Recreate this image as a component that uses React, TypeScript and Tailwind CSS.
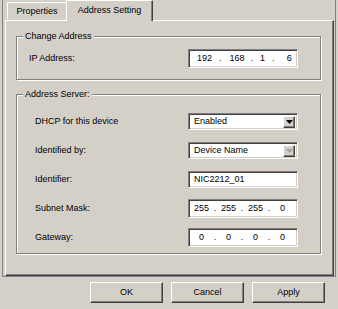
import React from "react";

const sunken =
  "border border-t-[#808080] border-l-[#808080] border-r-white border-b-white shadow-[inset_1px_1px_0_#404040,inset_-1px_-1px_0_#d4d0c8] bg-white";
const raised =
  "border border-t-white border-l-white border-r-[#404040] border-b-[#404040] shadow-[inset_-1px_-1px_0_#808080]";
const etched =
  "relative border border-[#808080] shadow-[inset_1px_1px_0_#fff,1px_1px_0_#fff]";

function Group({ title, className, children }: { title: string; className: string; children: React.ReactNode }) {
  return (
    <div className={`${etched} ${className}`}>
      <span className="absolute -top-[7px] left-[6px] px-[2px] bg-[#d4d0c8] leading-[12px]">{title}</span>
      {children}
    </div>
  );
}

function Row({ label, children }: { label: string; children: React.ReactNode }) {
  return (
    <div className="h-[29px] flex items-center justify-between">
      <span>{label}</span>
      {children}
    </div>
  );
}

function Select({ value, disabled }: { value: string; disabled?: boolean }) {
  return (
    <div className={`${sunken} w-[110px] h-[17px] flex items-center pl-[5px] pr-[2px]`}>
      <span className="flex-1">{value}</span>
      <span className={`${raised} bg-[#d4d0c8] w-[12px] h-[12px] flex items-center justify-center`}>
        <svg width="7" height="4" viewBox="0 0 7 4">
          <path d="M0 0h7L3.5 4z" fill={disabled ? "#a0a0a0" : "#000"} />
        </svg>
      </span>
    </div>
  );
}

function Ip({ parts }: { parts: string[] }) {
  return (
    <div className={`${sunken} w-[110px] h-[19px] flex items-center pl-[2px]`}>
      {parts.map((p, i) => (
        <React.Fragment key={i}>
          {i > 0 && <span className="w-[6px] text-center">.</span>}
          <span className="w-[21px] text-center">{p}</span>
        </React.Fragment>
      ))}
    </div>
  );
}

function Button({ label }: { label: string }) {
  return (
    <button className={`${raised} w-[73px] h-[21px] flex items-center justify-center bg-[#d4d0c8]`}>
      {label}
    </button>
  );
}

export default function App() {
  return (
    <div className="w-[338px] h-[309px] bg-[#d4d0c8] text-black text-[9px] leading-none overflow-hidden flex flex-col font-['Liberation_Sans',Arial,sans-serif]">
      {/* outer frame */}
      <div className="h-[277px] ml-[2px] mr-[2px] border-l border-r border-b border-[#808080] pl-[2px] pr-[1px] flex flex-col">
        {/* tabs */}
        <div className="h-[20px] flex items-end pl-[2px] relative z-10">
          <div className="h-[17px] w-[59px] border-t border-l border-white flex items-center justify-center mb-px">
            Properties
          </div>
          <div className="h-[21px] w-[87px] border-t border-l border-white border-r border-r-[#404040] shadow-[inset_-1px_0_0_#808080] bg-[#d4d0c8] -mb-px flex items-center justify-center pb-[2px]">
            Address Setting
          </div>
        </div>

        {/* pane */}
        <div className="flex-1 border-t border-l border-white border-r border-b border-r-[#404040] border-b-[#404040] shadow-[inset_-1px_-1px_0_#808080] pt-[15px] pl-[10px] pr-[12px]">
          <Group title="Change Address" className="h-[44px] flex items-center justify-between pl-[12px] pr-[22px]">
            <span>IP Address:</span>
            <div className={`${sunken} w-[110px] h-[19px] flex items-center pl-[8px]`}>
              <span>192</span>
              <span className="ml-[7px]">.</span>
              <span className="ml-[8px]">168</span>
              <span className="ml-[6px]">.</span>
              <span className="ml-[7px]">1</span>
              <span className="ml-[7px]">.</span>
              <span className="ml-[12px]">6</span>
            </div>
          </Group>

          <Group title="Address Server:" className="mt-[14px] h-[160px] pt-[12px] pl-[18px] pr-[22px]">
            <Row label="DHCP for this device">
              <Select value="Enabled" />
            </Row>
            <Row label="Identified by:">
              <Select value="Device Name" disabled />
            </Row>
            <Row label="Identifier:">
              <div className={`${sunken} w-[110px] h-[17px] flex items-center pl-[5px]`}>NIC2212_01</div>
            </Row>
            <Row label="Subnet Mask:">
              <Ip parts={["255", "255", "255", "0"]} />
            </Row>
            <Row label="Gateway:">
              <Ip parts={["0", "0", "0", "0"]} />
            </Row>
          </Group>
        </div>
      </div>

      {/* buttons */}
      <div className="flex justify-end gap-[8px] pt-[5px] pr-[13px]">
        <Button label="OK" />
        <Button label="Cancel" />
        <Button label="Apply" />
      </div>
    </div>
  );
}
